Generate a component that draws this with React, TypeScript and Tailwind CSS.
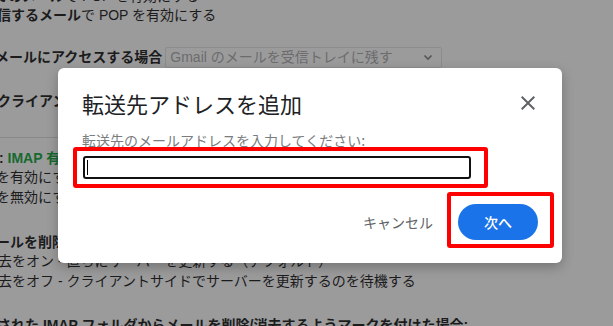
import React from "react";

const bgFont = { fontFamily: '"Liberation Sans", "Noto Sans CJK JP", sans-serif' };

export default function App() {
  return (
    <div
      className="relative w-[613px] h-[326px] overflow-hidden bg-[#9b9b9c] text-[14px] text-[#1c1c1c]"
      style={bgFont}
    >
      {/* Background settings page (dimmed) */}
      <div className="flex flex-col whitespace-nowrap">
        <div className="mt-[-13.5px] leading-[19px] -ml-[6px]">
          <b>てのメール</b>で POP を有効にする
        </div>
        <div className="leading-[19px] -ml-[3px]">
          <b>信するメール</b>で POP を有効にする
        </div>
        <div className="mt-[22px] flex items-center h-[21px] -ml-[5px]">
          <b>メールにアクセスする場合</b>
          <div className="ml-[3px] flex h-[21px] w-[277px] items-center justify-between rounded-[2px] border border-[#8c8c8d] pl-[4px] pr-[8px] text-[#6c6c6d]">
            <span>Gmail のメールを受信トレイに残す</span>
            <svg width="10" height="10" viewBox="0 0 10 10">
              <path d="M1.5 3.5 L5 7 L8.5 3.5" fill="none" stroke="#555" strokeWidth="1.6" />
            </svg>
          </div>
        </div>
        <div className="mt-[23px] leading-5 -ml-[3px]">
          <b>クライアントの設定</b>
        </div>
        <div className="mt-[26px] h-px w-[520px] bg-[#888889]" />
        <div className="mt-[11px] flex flex-col leading-[19.5px]">
          <div className="-ml-[1px] font-bold">
            : <span className="text-[#17692f]">IMAP 有効</span>
          </div>
          <div className="-ml-[4px]">を有効にする</div>
          <div className="-ml-[4px]">を無効にする</div>
        </div>
        <div className="mt-[25.5px] flex flex-col leading-[19.5px]">
          <div className="-ml-[4px] font-bold">ールを削除としてマークした場合:</div>
          <div className="-ml-[2px]">去をオン - 直ちにサーバーを更新する（デフォルト）</div>
          <div className="-ml-[2px]">去をオフ - クライアントサイドでサーバーを更新するのを待機する</div>
        </div>
        <div className="mt-[24px] leading-5 -ml-[3px] font-bold">
          された IMAP フォルダからメールを削除/消去するようマークを付けた場合:
        </div>
      </div>

      {/* Modal dialog */}
      <div
        className="absolute left-[58px] top-[68px] w-[504px] rounded-md bg-white pl-[24px] pr-[24px] pt-[21px] pb-[23px] shadow-[0_4px_12px_rgba(0,0,0,0.25)]"
        style={{ fontFamily: '"Noto Sans CJK JP", "Noto Sans", sans-serif' }}
      >
        <div className="flex items-center justify-between h-[28px]">
          <div className="text-[22px] leading-[28px] text-[#202124]">転送先アドレスを追加</div>
          <svg width="24" height="24" viewBox="0 0 24 24" className="mr-[-2px]">
            <path
              d="M19 6.41L17.59 5 12 10.59 6.41 5 5 6.41 10.59 12 5 17.59 6.41 19 12 13.41 17.59 19 19 17.59 13.41 12z"
              fill="#5f6368"
            />
          </svg>
        </div>
        <div className="mt-[13px] text-[14px] leading-5 text-[#7a7d80]">
          転送先のメールアドレスを入力してください:
        </div>
        <div className="mt-[6px] ml-px flex h-[23px] w-[388px] items-center rounded-[3px] border-2 border-[#111] pl-[2px]">
          <div className="h-[15px] w-px bg-black" />
        </div>
        <div className="mt-[25px] flex items-center justify-end gap-[13px]">
          <button className="h-9 px-3 text-[14px] text-[#5f6368]">キャンセル</button>
          <button className="h-9 w-[80px] rounded-full bg-[#1a73e8] text-[14px] font-medium text-white">
            次へ
          </button>
        </div>
      </div>

      {/* Red annotation boxes */}
      <div className="absolute left-[73px] top-[147px] h-[41px] w-[415px] rounded-[3px] border-4 border-[#ff0000]" />
      <div className="absolute left-[447px] top-[192px] h-[56px] w-[107px] rounded-[3px] border-4 border-[#ff0000]" />
    </div>
  );
}
